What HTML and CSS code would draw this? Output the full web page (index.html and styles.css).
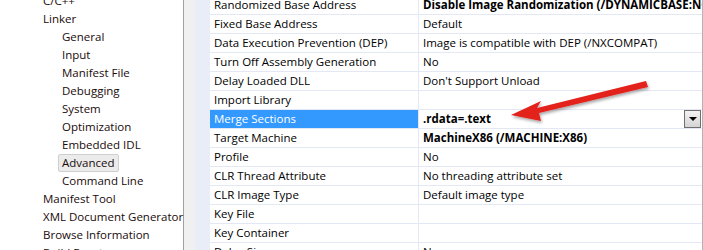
FILE: index.html
```html
<!DOCTYPE html>
<html lang="en">
<head>
  <meta charset="UTF-8">
  <title>Linker - Advanced</title>
  <link rel="stylesheet" href="styles.css">
</head>
<body>
  <div class="window">
    <div class="tree">
      <div class="node top">C/C++</div>
      <div class="node top">Linker</div>
      <div class="node sub">General</div>
      <div class="node sub">Input</div>
      <div class="node sub">Manifest File</div>
      <div class="node sub">Debugging</div>
      <div class="node sub">System</div>
      <div class="node sub">Optimization</div>
      <div class="node sub">Embedded IDL</div>
      <div class="node sub"><span class="selected">Advanced</span></div>
      <div class="node sub">Command Line</div>
      <div class="node top">Manifest Tool</div>
      <div class="node top">XML Document Generator</div>
      <div class="node top">Browse Information</div>
      <div class="node top">Build Events</div>
    </div>

    <div class="splitter"></div>

    <div class="grid">
      <div class="rows">
        <div class="row"><div class="name">Randomized Base Address</div><div class="value bold">Disable Image Randomization (/DYNAMICBASE:NO)</div></div>
        <div class="row"><div class="name">Fixed Base Address</div><div class="value">Default</div></div>
        <div class="row"><div class="name">Data Execution Prevention (DEP)</div><div class="value">Image is compatible with DEP (/NXCOMPAT)</div></div>
        <div class="row"><div class="name">Turn Off Assembly Generation</div><div class="value">No</div></div>
        <div class="row"><div class="name">Delay Loaded DLL</div><div class="value">Don't Support Unload</div></div>
        <div class="row"><div class="name">Import Library</div><div class="value"></div></div>
        <div class="row active">
          <div class="name">Merge Sections</div>
          <div class="value bold">.rdata=.text<span class="drop"><span class="tri"></span></span></div>
        </div>
        <div class="row"><div class="name">Target Machine</div><div class="value bold">MachineX86 (/MACHINE:X86)</div></div>
        <div class="row"><div class="name">Profile</div><div class="value">No</div></div>
        <div class="row"><div class="name">CLR Thread Attribute</div><div class="value">No threading attribute set</div></div>
        <div class="row"><div class="name">CLR Image Type</div><div class="value">Default image type</div></div>
        <div class="row"><div class="name">Key File</div><div class="value"></div></div>
        <div class="row"><div class="name">Key Container</div><div class="value"></div></div>
        <div class="row"><div class="name">Delay Sign</div><div class="value">No</div></div>
      </div>
    </div>

    <!-- annotation arrow drawn over the grid -->
    <svg class="arrow" width="703" height="250" viewBox="0 0 703 250">
      <defs>
        <filter id="shade" x="-20%" y="-50%" width="140%" height="200%">
          <feDropShadow dx="1" dy="2" stdDeviation="1.5" flood-color="#000" flood-opacity="0.35"/>
        </filter>
      </defs>
      <g filter="url(#shade)" fill="#e4201c">
        <polygon points="511,115 541,101 537,108 646,81 648,87 539,113 541,121"/>
      </g>
    </svg>
  </div>
</body>
</html>
```

FILE: styles.css
```css
body {
  margin: 0;
  font-family: 'Open Sans', 'Liberation Sans', sans-serif;
  font-size: 11.5px;
  color: #000;
  background: #fff;
  overflow: hidden;
}
.window {
  position: relative;
  display: flex;
  width: 703px;
  height: 250px;
  overflow: hidden;
}
.tree {
  width: 183px;
  border-right: 1px solid #a0a0a0;
  background: #fff;
  margin-top: -8px;
  flex: none;
}
.node {
  height: 18px;
  line-height: 18px;
  white-space: nowrap;
  color: #1a0a0a;
}
.node.top {
  padding-left: 43px;
}
.node.sub {
  padding-left: 62px;
}
.node.sub:has(.selected) {
  padding-left: 58px;
}
.node .selected {
  display: inline-block;
  height: 16px;
  line-height: 16px;
  padding: 0 3px;
  background: #ebebeb;
  border: 1px solid #cfcfcf;
  border-radius: 2px;
}
.splitter {
  width: 11px;
  flex: none;
  background: #f0f0f0;
}
.grid {
  flex: 1;
  min-width: 0;
  overflow: hidden;
  background: #e9edf8;
  padding-left: 15px;
  border-right: 1px solid #b4b4b4;
}
.rows {
  margin-top: -4px;
  background: #fff;
}
.row {
  display: flex;
  height: 18px;
  line-height: 18px;
  border-bottom: 1px solid #e4e7f4;
  white-space: nowrap;
}
.name {
  width: 209px;
  box-sizing: border-box;
  padding-left: 4px;
  border-right: 1px solid #e4e7f4;
  flex: none;
}
.value {
  flex: 1;
  min-width: 0;
  display: flex;
  align-items: center;
  padding-left: 4px;
  overflow: hidden;
}
.bold {
  font-weight: bold;
}
.row.active .name {
  background: #3399ff;
  color: #fff;
}
.drop {
  margin-left: auto;
  margin-right: 1px;
  width: 15px;
  height: 16px;
  flex: none;
  border: 1px solid #6f6f6f;
  background: linear-gradient(#f2f2f2, #d4d4d4);
  display: flex;
  align-items: center;
  justify-content: center;
}
.tri {
  width: 0;
  height: 0;
  border-left: 4px solid transparent;
  border-right: 4px solid transparent;
  border-top: 4px solid #000;
}
.arrow {
  position: absolute;
  left: 0;
  top: 0;
  pointer-events: none;
}
```
